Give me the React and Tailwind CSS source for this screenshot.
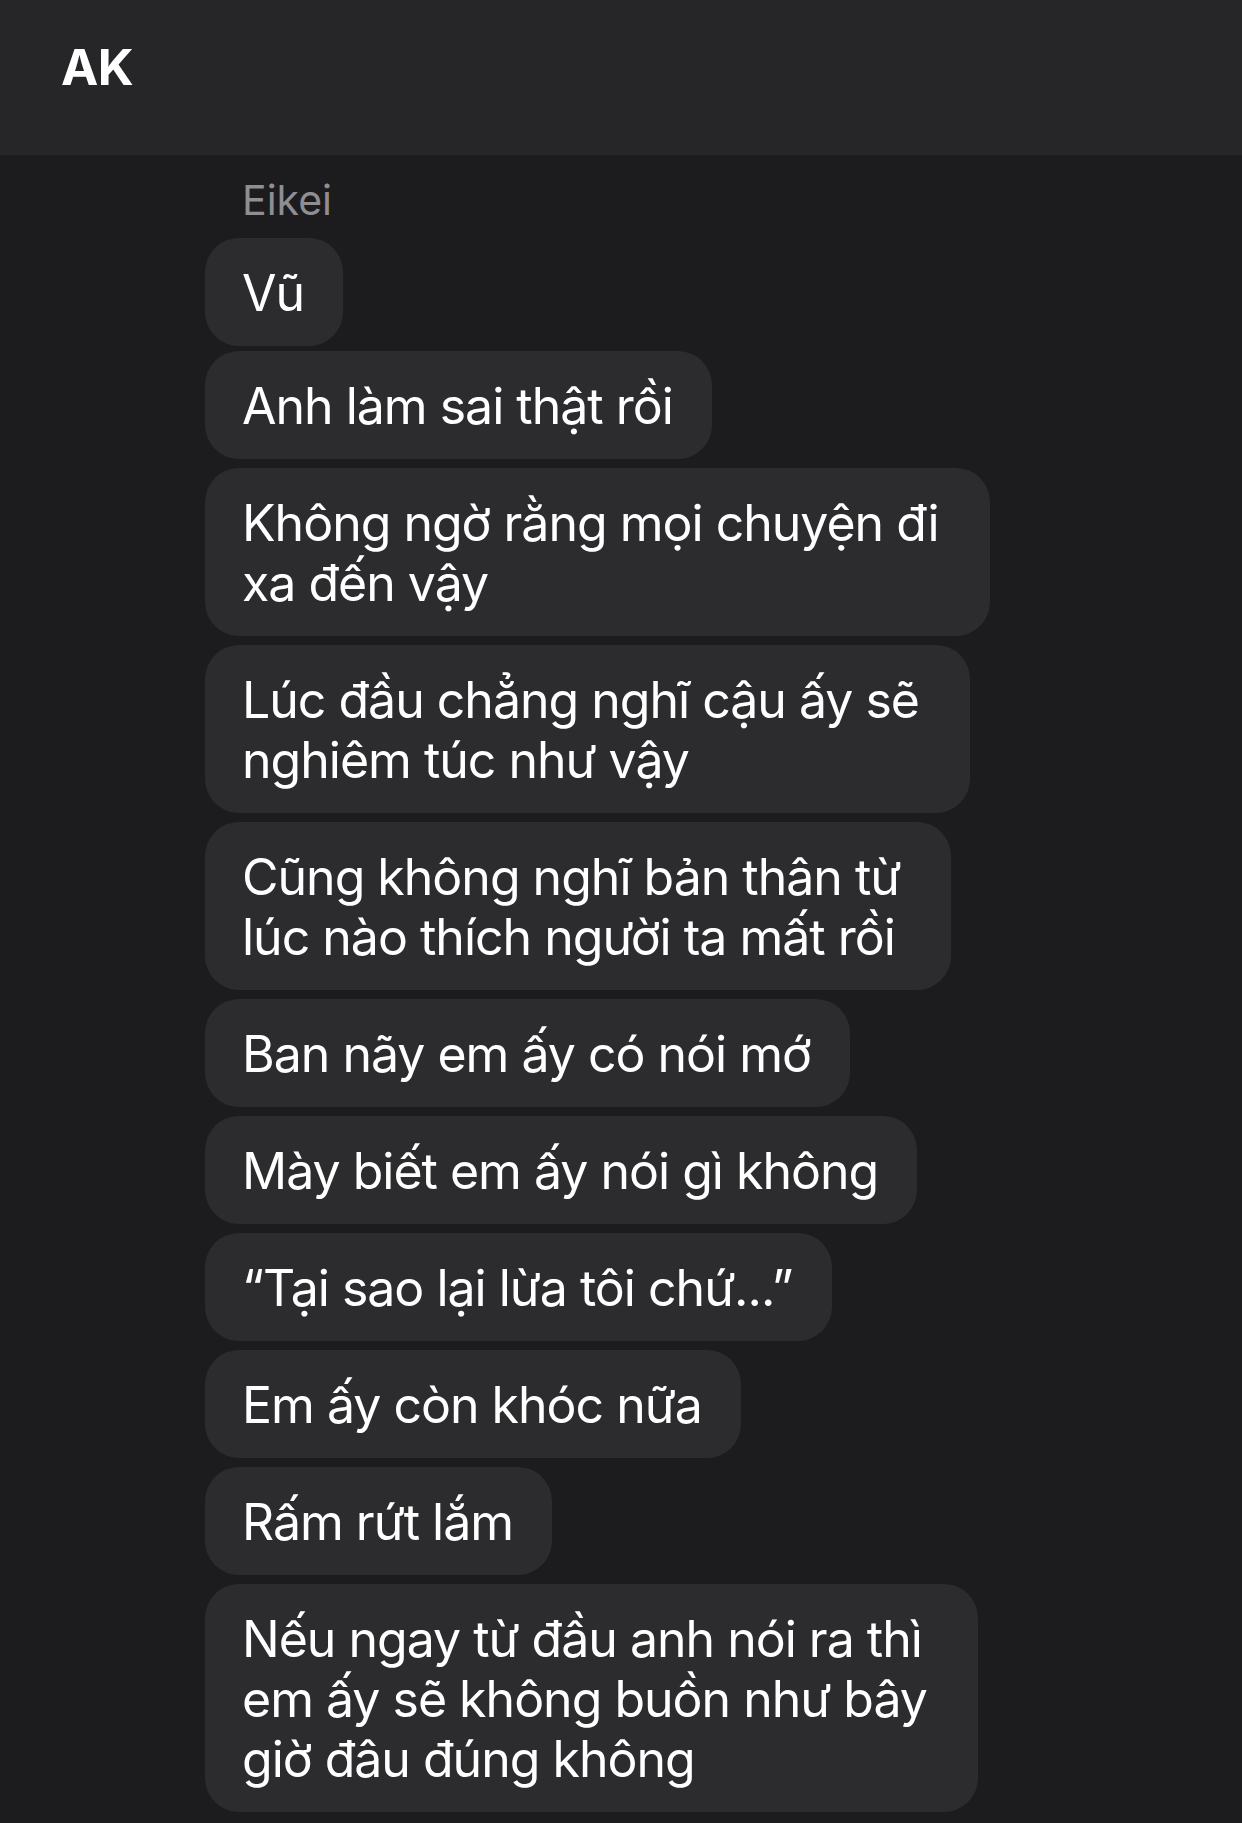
import React from "react";

const messages = [
  ["Vũ"],
  ["Anh làm sai thật rồi"],
  ["Không ngờ rằng mọi chuyện đi", "xa đến vậy"],
  ["Lúc đầu chẳng nghĩ cậu ấy sẽ", "nghiêm túc như vậy"],
  ["Cũng không nghĩ bản thân từ", "lúc nào thích người ta mất rồi"],
  ["Ban nãy em ấy có nói mớ"],
  ["Mày biết em ấy nói gì không"],
  ["“Tại sao lại lừa tôi chứ...”"],
  ["Em ấy còn khóc nữa"],
  ["Rấm rứt lắm"],
  ["Nếu ngay từ đầu anh nói ra thì", "em ấy sẽ không buồn như bây", "giờ đâu đúng không"],
];

export default function App() {
  return (
    <div className="w-[1242px] h-[1823px] overflow-hidden bg-[#1c1c1e] font-['Inter','Liberation_Sans',sans-serif] text-white">
      <div className="h-[155px] bg-[#262629] pl-[61px] pt-[42px]">
        <div className="text-[50px] leading-[50px] font-bold tracking-[-0.5px]">AK</div>
      </div>
      <div className="pl-[205px]">
        <div className="pl-[37px] mt-[20px] mb-[13px] text-[41px] leading-[50px] text-[#8e8e93]">
          Eikei
        </div>
        <div className="flex flex-col items-start">
          {messages.map((lines, i) => (
            <div
              key={i}
              className={
                (i === 0 ? "" : i === 1 ? "mt-[5px] " : "mt-[9px] ") +
                (lines.length > 1 ? "pr-[51px] " : "pr-[39px] ") +
                "w-fit rounded-[34px] bg-[#2c2c2e] pl-[37px] pt-[25px] pb-[23px] text-[50px] leading-[60px] tracking-[-1px] whitespace-nowrap"
              }
            >
              {lines.map((l, j) => (
                <div key={j}>{l}</div>
              ))}
            </div>
          ))}
        </div>
      </div>
    </div>
  );
}
